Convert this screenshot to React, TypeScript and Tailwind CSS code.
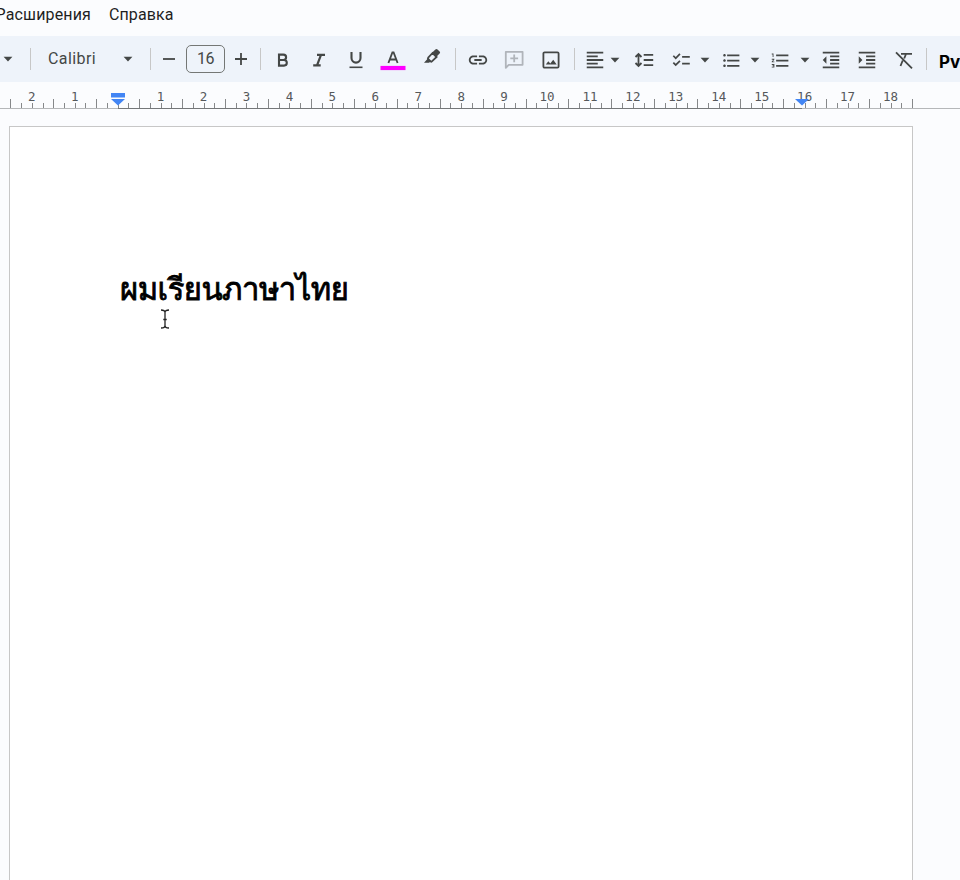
import type { ReactNode } from "react";
import {
  MdChecklist,
  MdFormatAlignLeft,
  MdFormatIndentDecrease,
  MdFormatIndentIncrease,
  MdFormatListBulleted,
  MdFormatListNumbered,
  MdLink,
} from "react-icons/md";

const rulerLabels = ["2", "1", "", ...Array.from({ length: 18 }, (_, i) => String(i + 1))];

function Icon({ className = "", children }: { className?: string; children: ReactNode }) {
  return (
    <button className={`mt-[2px] flex h-[22px] w-[22px] shrink-0 items-center justify-center text-[22px] text-[#444746] ${className}`}>
      {children}
    </button>
  );
}

function Glyph({ children }: { children: ReactNode }) {
  return (
    <svg viewBox="0 0 22 22" className="h-[22px] w-[22px] overflow-visible" fill="none" stroke="currentColor" strokeWidth="1.8">
      {children}
    </svg>
  );
}

function Caret({ className = "" }: { className?: string }) {
  return (
    <svg viewBox="0 0 10 6" className={`h-[6px] w-[10px] shrink-0 ${className}`}>
      <path d="M0.6 0.8h8.8L5 5.4z" fill="#444746" />
    </svg>
  );
}

function Separator({ className = "" }: { className?: string }) {
  return <div className={`h-[22px] w-px shrink-0 bg-[#c7c7c7] ${className}`} />;
}

function Toolbar() {
  return (
    <div className="flex h-[46px] items-center overflow-hidden bg-[#eef3fa] pl-[3px]">
      <Caret />
      <Separator className="ml-[17px]" />
      <div className="ml-[17px] w-[75px] shrink-0 text-[16px] leading-[20px] tracking-[0.4px] text-[#444746]">Calibri</div>
      <Caret />
      <Separator className="ml-[17px]" />
      <Icon className="ml-[6.5px] mt-0!">
        <Glyph><path d="M5 11h12" /></Glyph>
      </Icon>
      <div className="ml-[6.5px] flex h-[28px] w-[39px] shrink-0 items-center justify-center rounded-[5px] border border-[#747775] text-[16px] tracking-[-0.5px] text-[#444746]">16</div>
      <Icon className="ml-[5px] mt-0!">
        <Glyph><path d="M5 11h12M11 5v12" /></Glyph>
      </Icon>
      <Separator className="ml-[8px]" />
      <Icon className="ml-[11px]">
        <Glyph><path d="M7 5.6h4.4a2.7 2.7 0 0 1 0 5.4H7zM7 11h5a2.8 2.8 0 0 1 0 5.6H7z" strokeWidth="2.1" /></Glyph>
      </Icon>
      <Icon className="ml-[14px]">
        <Glyph><path d="M9 5.9h8M5.2 16.4h7.5M13 5.9 9 16.4" strokeWidth="2.2" /></Glyph>
      </Icon>
      <Icon className="ml-[14.5px]">
        <Glyph><path d="M6.5 3v6.1a4.5 4.5 0 0 0 9 0V3" strokeWidth="2.1" /><path d="M4.5 18.3h13" strokeWidth="1.6" /></Glyph>
      </Icon>
      <Icon className="ml-[15.5px]">
        <Glyph><path d="M6.4 14 10.4 3.4h1.2l4 10.6M7.8 10.5h6.4" /><path d="M-1.5 19h25" stroke="#ff00ff" strokeWidth="4.2" /></Glyph>
      </Icon>
      <Icon className="ml-[16.5px]">
        <Glyph>
          <path d="M7.2 8.7 11.6 4l4 4-4.7 4.4c-.4.4-.9.4-1.3 0L7.2 10c-.4-.4-.4-.9 0-1.3z" strokeWidth="1.8" />
          <path d="m10.7 4.1 3.7-3.7c.7-.7 1.5-.7 2.1 0l2.1 2.1c.7.7.7 1.4 0 2.1l-3.7 3.7zM6.6 9.8 3 13.8h5l2.1-1.6z" fill="currentColor" stroke="none" />
        </Glyph>
      </Icon>
      <Separator className="ml-[12.5px]" />
      <Icon className="ml-[10.5px]"><MdLink /></Icon>
      <Icon className="ml-[14px] text-[#b0b4ba]!">
        <Glyph><path d="M2.8 18.9V2.8h16.8v13H5.7zM11.2 5.4v7.8M7.3 9.3h7.8" strokeLinejoin="round" /></Glyph>
      </Icon>
      <Icon className="ml-[15px]">
        <Glyph>
          <rect x="3.4" y="3.4" width="15.2" height="15.2" rx="1.2" />
          <path d="m5.8 15.6 2.5-3.4 2 2.4 2.9-3.9 3.5 4.9z" fill="currentColor" stroke="none" />
        </Glyph>
      </Icon>
      <Separator className="ml-[12.5px]" />
      <Icon className="ml-[8.5px]"><MdFormatAlignLeft /></Icon>
      <Caret className="ml-[4px] mt-[2px]" />
      <Icon className="ml-[13px]">
        <Glyph><path d="M10.7 5.8h9.5M10.7 11h9.5M10.7 16.2h9.5M5.5 6v10M2.5 8l3-3 3 3M2.5 14l3 3 3-3" /></Glyph>
      </Icon>
      <Icon className="ml-[16px]"><MdChecklist className="h-[20.5px] w-[20.5px]" /></Icon>
      <Caret className="ml-[7.5px] mt-[2px]" />
      <Icon className="ml-[10.5px]"><MdFormatListBulleted className="h-[21px] w-[21px]" /></Icon>
      <Caret className="ml-[7.5px] mt-[2px]" />
      <Icon className="ml-[9.5px]"><MdFormatListNumbered className="h-[21px] w-[21px]" /></Icon>
      <Caret className="ml-[8px] mt-[2px]" />
      <Icon className="ml-[10.5px]"><MdFormatIndentDecrease /></Icon>
      <Icon className="ml-[14px]"><MdFormatIndentIncrease /></Icon>
      <Icon className="ml-[14.5px]">
        <Glyph>
          <path d="M3 3.4 19 19.3M8 4.9h11M13 5l-1.8 4.5M9.7 11.5 7.5 17" />
        </Glyph>
      </Icon>
      <Separator className="ml-[11px]" />
      <div className="ml-[12.5px] mt-[3px] h-[15px] shrink-0 overflow-hidden font-[Inter,sans-serif] text-[17px] font-bold leading-[18px] text-black">Ру</div>
    </div>
  );
}

function Ruler() {
  return (
    <div className="relative h-[27px]">
      <div className="flex h-[26px] pl-[10.3px]">
        {rulerLabels.map((label, i) => (
          <div key={i} className="flex w-[42.95px] shrink-0 flex-col justify-between">
            <div className="h-[17px] pt-[8px] text-center font-['DejaVu_Sans_Mono',monospace] text-[12.5px] leading-[14px] text-[#55585b]">{label}</div>
            <div className="flex h-[9px] items-end">
              <span className="h-[9px] w-[10.74px] border-l border-[#86888a]" />
              <span className="h-[5px] w-[10.74px] border-l border-[#86888a]" />
              <span className="h-[5px] w-[10.74px] border-l border-[#86888a]" />
              <span className="h-[5px] w-[10.74px] border-l border-[#86888a]" />
            </div>
          </div>
        ))}
        <div className="mt-auto h-[9px] w-px bg-[#86888a]" />
      </div>
      <div className="flex h-px">
        <div className="w-[118px] bg-[#b5b7b9]" />
        <div className="w-[684px] bg-[#747779]" />
        <div className="flex-1 bg-[#b5b7b9]" />
      </div>
      <svg className="absolute left-[111px] top-[11px] h-[13px] w-[14px]" viewBox="0 0 14 13" fill="#4285f4">
        <path d="M0 0h14v4.6H0zM0 6h14l-7 6.6z" />
      </svg>
      <svg className="absolute left-[795px] top-[17px] h-[7px] w-[14px]" viewBox="0 0 14 7" fill="#4285f4">
        <path d="M0 0h14L7 6.6z" />
      </svg>
    </div>
  );
}

export default function App() {
  return (
    <div className="flex h-[880px] w-[960px] flex-col overflow-hidden bg-[#fbfcfe] font-[Roboto,'Noto_Sans',sans-serif]">
      <nav className="flex h-[36px] shrink-0 gap-[18px] pt-[5px] text-[16px] leading-[20px] text-[#1f1f1f]">
        <div className="flex w-[91px] justify-end whitespace-nowrap tracking-[0.15px]">Расширения</div>
        <div className="whitespace-nowrap tracking-[0.1px]">Справка</div>
      </nav>
      <Toolbar />
      <Ruler />
      <main className="relative ml-[9px] mt-[17px] w-[904px] flex-1 border border-b-0 border-[#c7c7c7] bg-white pl-[110px] pt-[137px]">
        <h1 className="h-[50px] whitespace-nowrap font-[Loma,'Noto_Sans_Thai',sans-serif] text-[31px] font-normal leading-[50px] tracking-[-0.52px] text-black [-webkit-text-stroke:0.8px_#000]">ผมเรียนภาษาไทย</h1>
        <svg className="absolute left-[150px] top-[182px] h-[20px] w-[10px]" viewBox="0 0 10 20" fill="none" stroke="#222" strokeWidth="1.3">
          <path d="M1 1c2.6 0 4 .7 4 2.6v12.8C5 18.3 3.6 19 1 19M9 1C6.4 1 5 1.7 5 3.6v12.8C5 18.3 6.4 19 9 19M3.3 10.5h3.4" />
        </svg>
      </main>
    </div>
  );
}
